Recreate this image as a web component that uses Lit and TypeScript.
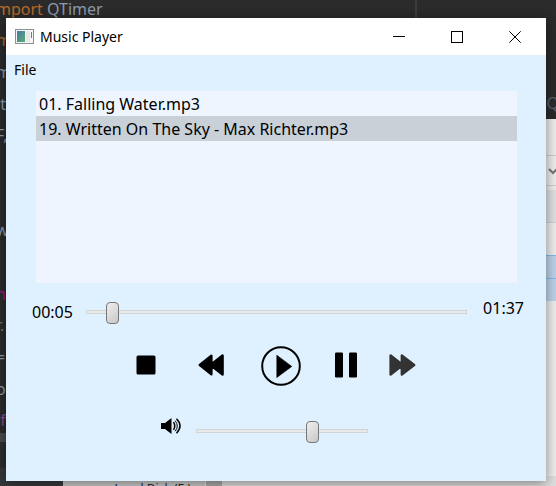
import { LitElement, html, css, svg } from "lit";
import { customElement, state } from "lit/decorators.js";
import { classMap } from "lit/directives/class-map.js";

const FONT = css`"Noto Sans", "Open Sans", sans-serif`;

/** The editor and file manager that show around the edges of the player. */
@customElement("desktop-backdrop")
export class DesktopBackdrop extends LitElement {
  static styles = css`
    :host {
      position: absolute;
      inset: 0;
      overflow: hidden;
      background: #ececec;
      font-family: ${FONT};
    }
    .editor {
      position: absolute;
      inset: 0 0 auto 0;
      height: 119px;
      background: #2b2b2b;
    }
    .split {
      position: absolute;
      left: 415px;
      top: 0;
      width: 2px;
      height: 100%;
      background: #3c3c3c;
    }
    .query {
      position: absolute;
      right: -3px;
      top: 92px;
      font-size: 16px;
      line-height: 22px;
      color: #59616b;
    }
    .gutter {
      position: absolute;
      inset: 0 auto 0 0;
      width: 63px;
      background: linear-gradient(#2b2b2b 433px, #4b4b4b 433px, #4b4b4b 442px, #2b2e30 442px, #2b2e30 468px, #36393b 468px);
    }
    .code {
      position: absolute;
      left: -4px;
      top: -7px;
      bottom: 50px;
      display: grid;
      grid-auto-rows: 1fr;
      align-items: center;
      font-size: 16px;
      line-height: 24px;
      white-space: pre;
      color: #8d9bab;
    }
    .key { color: #b8692c; }
    .self { color: #a0109a; }
    .dunder { color: #8c4a92; }
    .str { color: #5c7c4e; }
    .explorer {
      position: absolute;
      inset: 119px 0 0 auto;
      width: 12px;
      display: flex;
      flex-direction: column;
      background: #eeeeee;
    }
    .bar { height: 36px; border-bottom: 1px solid #cfcfcf; }
    .combo {
      height: 29px;
      border-bottom: 1px solid #cfcfcf;
      display: flex;
      align-items: center;
      justify-content: flex-end;
    }
    .combo svg { width: 8px; height: 8px; }
    .head { height: 32px; margin-top: 4px; background: #dfe1e3; border-bottom: 1px solid #d0d2d4; }
    .rows { margin-top: 32px; }
    .pick { height: 22px; background: #bdd3ea; border-top: 1px solid #84bdec; }
    .footer {
      position: absolute;
      inset: auto 0 0 63px;
      height: 10px;
      display: flex;
      overflow: hidden;
      background: #dedede;
    }
    .drive {
      width: 142px;
      box-sizing: border-box;
      padding: 1px 14px 0 0;
      text-align: right;
      font-size: 12px;
      line-height: 24px;
      background: #c9c9c9;
      color: #20262e;
    }
    .scroll { width: 16px; background: #aaaaaa; border-left: 1px solid #e4e4e4; }
  `;

  render() {
    return html`
      <div class="editor"><div class="split"></div><div class="query">Q</div></div>
      <div class="explorer">
        <div class="bar"></div>
        <div class="combo">
          <svg viewBox="0 0 8 8" aria-hidden="true"><path d="M1 2l4 4 4-4" fill="none" stroke="#777" stroke-width="2" /></svg>
        </div>
        <div class="head"></div>
        <div class="rows"><div class="pick"></div><div class="pick"></div></div>
      </div>
      <div class="footer"><div class="drive">Local Disk (E:)</div><div class="scroll"></div></div>
      <div class="gutter"></div>
      <div class="code">
        <div><span class="key">mport</span> QTimer</div>
        <div class="key">m</div>
        <div>m</div>
        <div> t</div>
        <div>F,</div>
        <div> </div>
        <div> </div>
        <div>w</div>
        <div> </div>
        <div class="self">ni</div>
        <div class="str">r.</div>
        <div>=</div>
        <div>or</div>
        <div class="dunder"> f</div>
      </div>
    `;
  }
}

const icons = {
  stop: svg`<svg width="20" height="20" viewBox="0 0 20 20"><rect x=".5" y=".5" width="19" height="19" rx="1.5"/></svg>`,
  rewind: svg`<svg width="27" height="22" viewBox="0 0 27 22"><path d="M1.8 11L13.4 1.8V20.2ZM12.5 11L24.6 1.5V20.5Z" stroke="currentColor" stroke-width="2.4" stroke-linejoin="round"/></svg>`,
  play: svg`<svg width="40" height="40" viewBox="0 0 40 40"><circle cx="20" cy="20" r="18.8" fill="none" stroke="currentColor" stroke-width="2"/><path d="M15.8 9.2L30.8 20.4L15.8 31.6Z" stroke="currentColor" stroke-width=".6" stroke-linejoin="round"/></svg>`,
  pause: svg`<svg width="22" height="26" viewBox="0 0 22 26"><rect y=".4" width="8" height="25" rx="1.2"/><rect x="14" y=".4" width="8" height="25" rx="1.2"/></svg>`,
  forward: svg`<svg width="27" height="22" viewBox="0 0 27 22"><path d="M1.6 1.5V20.5L13.8 11ZM12.8 1.5V20.5L25.2 11Z" stroke="currentColor" stroke-width="2.4" stroke-linejoin="round"/></svg>`,
};

@customElement("app-root")
export class AppRoot extends LitElement {
  static styles = css`
    :host {
      position: relative;
      display: flex;
      min-height: 100vh;
      box-sizing: border-box;
      padding: 18px 10px 5px 6px;
      font-family: ${FONT};
      color: #000;
    }
    button {
      border: 0;
      padding: 0;
      margin: 0;
      background: none;
      color: inherit;
      font: inherit;
      display: flex;
      align-items: center;
      justify-content: center;
    }
    button svg { fill: currentColor; display: block; }
    .window {
      position: relative;
      flex: 1;
      display: flex;
      flex-direction: column;
      background: #dff1fe;
      box-shadow: 0 2px 12px rgba(0, 0, 0, 0.45);
    }
    .titlebar {
      display: flex;
      align-items: center;
      height: 37px;
      padding: 0 2px 0 9px;
      background: #fff;
    }
    .title {
      flex: 1;
      margin: 0 0 0 6px;
      font-size: 14px;
      font-weight: 400;
      line-height: 20px;
    }
    .control { width: 58px; height: 37px; }
    .control svg { fill: none; stroke: #000; }
    .menubar { display: flex; height: 28px; padding-left: 8px; font-size: 14px; }
    .list {
      list-style: none;
      height: 192px;
      margin: 8px 29px 0 30px;
      padding: 0;
      background: #eef5ff;
      font-size: 16px;
    }
    .track {
      width: 100%;
      height: 25px;
      justify-content: flex-start;
      padding: 0 3px;
      white-space: nowrap;
    }
    .selected { background: #c9d0d8; }
    .seek {
      display: flex;
      align-items: center;
      height: 32px;
      margin: 13px 22px 0 26px;
      font-size: 16px;
      line-height: 24px;
    }
    .seek .range { flex: 1; margin: 0 16px 0 13px; }
    .total { align-self: flex-start; }
    .range {
      appearance: none;
      -webkit-appearance: none;
      min-width: 0;
      height: 22px;
      margin: 0;
      background: none;
    }
    .range::-webkit-slider-runnable-track {
      height: 4px;
      box-sizing: border-box;
      border: 1px solid #d3d3d3;
      background: #e7eaea;
    }
    .range::-webkit-slider-thumb {
      -webkit-appearance: none;
      box-sizing: border-box;
      width: 13px;
      height: 22px;
      margin-top: -9px;
      border: 1px solid #777;
      border-radius: 4px;
      background: linear-gradient(135deg, #eeeeee, #c8c8c8);
    }
    .transport {
      display: grid;
      grid-template-columns: 60px 70px 70px 60px 52px;
      justify-content: center;
      height: 40px;
      margin: 18px 8px 0 0;
    }
    .transport button { height: 38px; }
    .transport .main { height: 40px; }
    .next { color: #333; }
    .volume {
      display: flex;
      align-items: center;
      justify-content: center;
      gap: 14px;
      margin: 32px 24px 0 0;
    }
    .volume label { display: flex; }
    .volume .range { width: 172px; }
    .speaker { margin-bottom: 10px; }
  `;

  @state() private selected = 1;

  private tracks = ["01. Falling Water.mp3", "19. Written On The Sky - Max Richter.mp3"];

  render() {
    return html`
      <desktop-backdrop aria-hidden="true"></desktop-backdrop>
      <main class="window">
        <header class="titlebar">
          <svg width="19" height="15" viewBox="0 0 19 15" aria-hidden="true">
            <defs>
              <linearGradient id="pane" x1="0" y1="0" x2="1" y2="1">
                <stop offset="0" stop-color="#4777a0" /><stop offset="1" stop-color="#58ad78" />
              </linearGradient>
            </defs>
            <rect x=".5" y=".5" width="18" height="14" fill="#f6f6f6" stroke="#8a9097" />
            <rect x="2" y="2" width="8" height="11" fill="url(#pane)" />
            <rect x="11" y="2" width="4" height="11" fill="#e6e8ea" />
            <rect x="16" y="3" width="1" height="6" fill="#4b8b8e" />
          </svg>
          <h1 class="title">Music Player</h1>
          <button class="control" aria-label="Minimize">
            <svg width="12" height="12" viewBox="0 0 12 12"><path d="M0 5.5H12" /></svg>
          </button>
          <button class="control" aria-label="Maximize">
            <svg width="12" height="12" viewBox="0 0 12 12"><rect x=".5" y=".5" width="11" height="11" /></svg>
          </button>
          <button class="control" aria-label="Close">
            <svg width="12" height="12" viewBox="0 0 12 12"><path d="M.3 .3L11.7 11.7M11.7 .3L.3 11.7" /></svg>
          </button>
        </header>
        <nav class="menubar"><button>File</button></nav>
        <ul class="list">
          ${this.tracks.map(
            (name, i) => html`<li>
              <button
                class=${classMap({ track: true, selected: i === this.selected })}
                @click=${() => (this.selected = i)}
              >${name}</button>
            </li>`
          )}
        </ul>
        <section class="seek">
          <span>00:05</span>
          <input class="range" type="range" aria-label="Position" min="0" max="97" .value=${"5"} />
          <span class="total">01:37</span>
        </section>
        <section class="transport">
          <button aria-label="Stop">${icons.stop}</button>
          <button aria-label="Previous">${icons.rewind}</button>
          <button class="main" aria-label="Play">${icons.play}</button>
          <button aria-label="Pause">${icons.pause}</button>
          <button class="next" aria-label="Next">${icons.forward}</button>
        </section>
        <section class="volume">
          <label class="speaker" for="volume" aria-label="Volume">
            <svg width="21" height="16" viewBox="0 0 21 16">
              <path d="M0 5H4L10.5 0V16L4 11H0Z" />
              <path d="M12.5 4.2Q15 8 12.5 11.8M15.5 .8Q22.5 8 15.5 15.2" fill="none" stroke="#000" stroke-width="1.5" />
              <path d="M14.2 2.8Q18.4 8 14.2 13.2" fill="none" stroke="#000" stroke-width="1" />
            </svg>
          </label>
          <input id="volume" class="range" type="range" min="0" max="100" .value=${"70"} />
        </section>
      </main>
    `;
  }
}
